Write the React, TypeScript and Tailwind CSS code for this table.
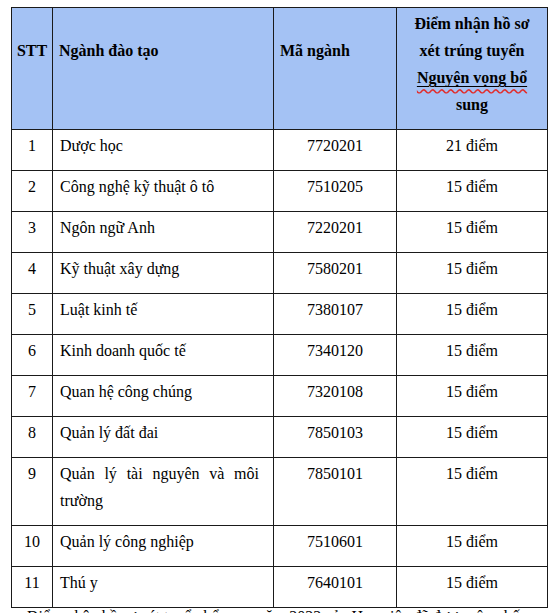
const rows = [
  { stt: "1", name: "Dược học", code: "7720201", score: "21 điểm" },
  { stt: "2", name: "Công nghệ kỹ thuật ô tô", code: "7510205", score: "15 điểm" },
  { stt: "3", name: "Ngôn ngữ Anh", code: "7220201", score: "15 điểm" },
  { stt: "4", name: "Kỹ thuật xây dựng", code: "7580201", score: "15 điểm" },
  { stt: "5", name: "Luật kinh tế", code: "7380107", score: "15 điểm" },
  { stt: "6", name: "Kinh doanh quốc tế", code: "7340120", score: "15 điểm" },
  { stt: "7", name: "Quan hệ công chúng", code: "7320108", score: "15 điểm" },
  { stt: "8", name: "Quản lý đất đai", code: "7850103", score: "15 điểm" },
  { stt: "9", name: "Quản lý tài nguyên và môi trường", code: "7850101", score: "15 điểm" },
  { stt: "10", name: "Quản lý công nghiệp", code: "7510601", score: "15 điểm" },
  { stt: "11", name: "Thú y", code: "7640101", score: "15 điểm" },
];

const cell = "border-r border-b border-[#1a1a1a] pt-[2px] leading-[27px]";

export default function App() {
  return (
    <div className="w-[560px] h-[613px] overflow-hidden bg-white pt-[7px] pl-[11px] text-[16px] text-black font-['Liberation_Serif','Times_New_Roman',serif]">
      <div className="grid grid-cols-[41px_221px_123px_151px] w-[537px] border-l border-t border-[#1a1a1a]">
        {/* header */}
        <div className={`${cell} h-[122px] bg-[#a4c2f4] font-bold text-center pt-[29px]`}>STT</div>
        <div className={`${cell} h-[122px] bg-[#a4c2f4] font-bold pl-[6px] pt-[29px]`}>Ngành đào tạo</div>
        <div className={`${cell} h-[122px] bg-[#a4c2f4] font-bold pl-[6px] pt-[29px]`}>Mã ngành</div>
        <div className={`${cell} h-[122px] bg-[#a4c2f4] font-bold text-center`}>
          Điểm nhận hồ sơ
          <br />
          xét trúng tuyển
          <br />
          <span className="underline decoration-black underline-offset-[3px]">
            <span className="underline decoration-wavy decoration-[#e03030] underline-offset-[5px]">Nguyện vọng bổ</span>
          </span>
          <br />
          sung
        </div>

        {rows.map((r) => {
          const h = r.stt === "9" ? "h-[68px]" : "h-[41px]";
          return (
            <div key={r.stt} className="contents">
              <div className={`${cell} ${h} text-center`}>{r.stt}</div>
              <div className={`${cell} ${h} pl-[7px] pr-[14px] text-justify`}>{r.name}</div>
              <div className={`${cell} ${h} text-center`}>{r.code}</div>
              <div className={`${cell} ${h} text-center`}>{r.score}</div>
            </div>
          );
        })}
      </div>
      <p className="leading-[18px] pl-[16px] whitespace-nowrap">
        Điểm nhận hồ sơ xét tuyển bổ sung năm 2022 của Học viện đã được công bố.
      </p>
    </div>
  );
}
